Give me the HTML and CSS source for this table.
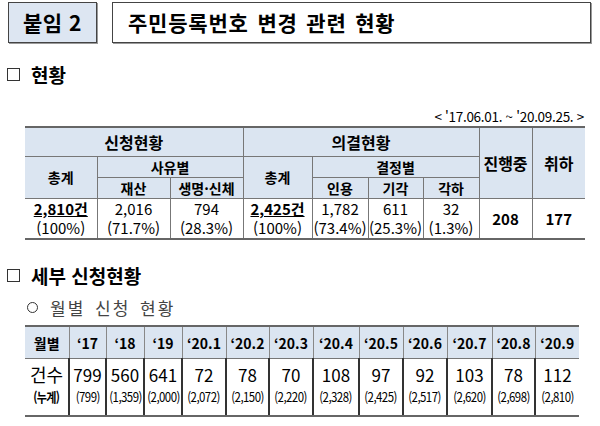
FILE: index.html
```html
<!DOCTYPE html>
<html lang="ko">
<head>
<meta charset="utf-8">
<link rel="stylesheet" href="styles.css">
</head>
<body>
<div class="page">
  <div class="title-row">
    <div class="tag">붙임 2</div>
    <div class="title">주민등록번호 변경 관련 현황</div>
  </div>

  <div class="sec sec1"><span class="box"></span><span>현황</span></div>
  <div class="period">&lt; '17.06.01. ~ '20.09.25. &gt;</div>

  <table class="t1">
    <colgroup>
      <col style="width:72px"><col style="width:73px"><col style="width:73px">
      <col style="width:69px"><col style="width:56px"><col style="width:55px"><col style="width:56px">
      <col style="width:53px"><col style="width:53px">
    </colgroup>
    <tr class="h1">
      <th colspan="3" class="big">신청현황</th>
      <th colspan="4" class="big">의결현황</th>
      <th rowspan="3" class="big">진행중</th>
      <th rowspan="3" class="big">취하</th>
    </tr>
    <tr class="h2">
      <th rowspan="2">총계</th>
      <th colspan="2">사유별</th>
      <th rowspan="2">총계</th>
      <th colspan="3">결정별</th>
    </tr>
    <tr class="h3">
      <th>재산</th><th>생명·신체</th>
      <th>인용</th><th>기각</th><th>각하</th>
    </tr>
    <tr class="d">
      <td><b class="u">2,810건</b><br>(100%)</td>
      <td>2,016<br>(71.7%)</td>
      <td>794<br>(28.3%)</td>
      <td><b class="u">2,425건</b><br>(100%)</td>
      <td>1,782<br>(73.4%)</td>
      <td>611<br>(25.3%)</td>
      <td>32<br>(1.3%)</td>
      <td><b>208</b></td>
      <td><b>177</b></td>
    </tr>
  </table>

  <div class="sec sec2"><span class="box"></span><span>세부 신청현황</span></div>
  <div class="sub"><span class="circ"></span><span class="subtxt">월별 신청 현황</span></div>

  <table class="t2">
    <colgroup>
      <col style="width:44px"><col style="width:37px"><col style="width:38px"><col style="width:38px">
      <col style="width:44px"><col style="width:43px"><col style="width:44px"><col style="width:46px">
      <col style="width:44px"><col style="width:44px"><col style="width:45px"><col style="width:43px"><col style="width:44px">
    </colgroup>
    <tr class="hh">
      <th>월별</th><th>‘17</th><th>‘18</th><th>‘19</th><th>‘20.1</th><th>‘20.2</th><th>‘20.3</th>
      <th>‘20.4</th><th>‘20.5</th><th>‘20.6</th><th>‘20.7</th><th>‘20.8</th><th>‘20.9</th>
    </tr>
    <tr class="dd">
      <td class="lbl">건수<br><span class="cum">(누계)</span></td>
      <td>799<br><span class="sm">(799)</span></td>
      <td>560<br><span class="sm">(1,359)</span></td>
      <td>641<br><span class="sm">(2,000)</span></td>
      <td>72<br><span class="sm">(2,072)</span></td>
      <td>78<br><span class="sm">(2,150)</span></td>
      <td>70<br><span class="sm">(2,220)</span></td>
      <td>108<br><span class="sm">(2,328)</span></td>
      <td>97<br><span class="sm">(2,425)</span></td>
      <td>92<br><span class="sm">(2,517)</span></td>
      <td>103<br><span class="sm">(2,620)</span></td>
      <td>78<br><span class="sm">(2,698)</span></td>
      <td>112<br><span class="sm">(2,810)</span></td>
    </tr>
  </table>
</div>
</body>
</html>
```
FILE: styles.css
```css
html, body { margin: 0; padding: 0; background: #fff; }
body { font-family: "Noto Sans CJK KR", "Noto Sans", sans-serif; color: #000; width: 600px; height: 426px; overflow: hidden; }
.page { position: relative; }

.title-row { display: flex; gap: 15px; padding: 2px 0 0 8px; height: 44px; box-sizing: border-box; }
.tag, .title {
  height: 41px; box-sizing: border-box; border: 1px solid #444;
  box-shadow: 1px 1px 0 #9a9a9a; display: flex; align-items: center;
  font-weight: bold; font-size: 21px; line-height: 1;
}
.tag { width: 89px; background: #dde6f2; justify-content: center; letter-spacing: 0.5px; }
.title { width: 479px; background: #fff; padding-left: 15px; font-size: 21px; letter-spacing: 0.8px; word-spacing: 2px; }

.sec { display: flex; align-items: center; gap: 11px; font-weight: bold; font-size: 19px; line-height: 1; padding-left: 7px; }
.sec .box { width: 13px; height: 13px; border: 1px solid #333; box-sizing: border-box; }
.sec1 { margin-top: 20px; height: 20px; }
.sec2 { margin-top: 24px; height: 22px; }

.period { text-align: right; width: 584px; font-size: 13.5px; line-height: 14px; margin-top: 25px; height: 17px; letter-spacing: -0.3px; }

table { border-collapse: collapse; table-layout: fixed; margin-left: 25px; }
.t1 { width: 560px; margin-top: 0; }
.t1 th, .t1 td { border: 1px solid #777; padding: 0; text-align: center; }
.t1 th { background: #dbe5f1; font-weight: bold; font-size: 14px; line-height: 1; }
.t1 .big { font-size: 16px; }
.t1 tr.h1 { height: 29px; }
.t1 tr.h2 { height: 21px; }
.t1 tr.h3 { height: 21px; }
.t1 tr.h1 th { border-top: 2px solid #666; }
.t1 tr.d { height: 41px; }
.t1 tr.d td { border-bottom: 2px solid #666; font-size: 15px; line-height: 19px; background: #fff; }
.t1 .u { text-decoration: underline; }
.t1 th:first-child, .t1 td:first-child { border-left: none; }
.t1 th:last-child, .t1 td:last-child { border-right: none; }

.sub { display: flex; align-items: center; gap: 12px; padding-left: 27px; margin-top: 10px; height: 22px; }
.circ { width: 11px; height: 11px; border: 1px solid #333; border-radius: 50%; box-sizing: border-box; }
.subtxt { font-size: 17px; color: #444; letter-spacing: 2px; word-spacing: 3px; }

.t2 { width: 554px; margin-top: 7px; }
.t2 th, .t2 td { padding: 0; text-align: center; }
.t2 th { background: #dbe5f1; font-weight: bold; font-size: 14px; height: 31px; border-top: 2px solid #666; border-left: 1px solid #888; border-bottom: 1px solid #777; }
.t2 th:first-child, .t2 td:first-child { border-left: none; }
.t2 td { height: 53px; border-left: 2px solid #333; border-bottom: 2px solid #666; font-size: 17px; line-height: 20px; vertical-align: middle; padding-bottom: 3px; }
.t2 .sm { display: inline-block; font-size: 13px; letter-spacing: -0.6px; transform: scaleX(0.88); white-space: nowrap; }
.t2 .lbl { font-size: 18px; line-height: 20px; }
.t2 .cum { display: inline-block; font-size: 13px; font-weight: bold; letter-spacing: -0.8px; transform: scaleX(0.85); }
```
